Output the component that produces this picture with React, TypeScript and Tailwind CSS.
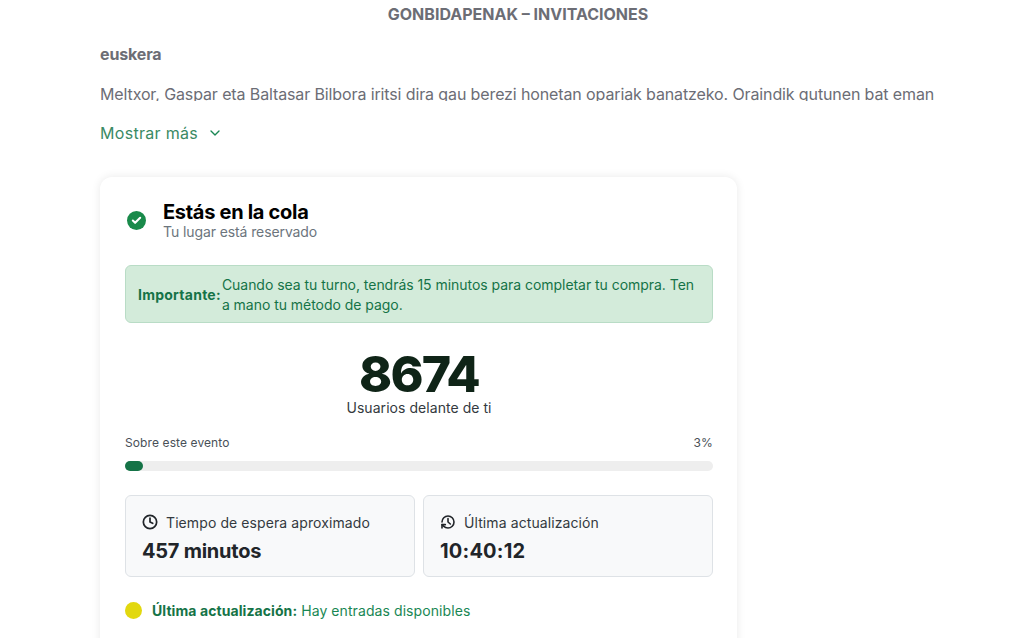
import { Check, ChevronDown, Clock } from 'lucide-react';

function HistoryIcon() {
  return (
    <svg viewBox="0 0 24 24" fill="none" stroke="currentColor" strokeWidth={2.4} strokeLinecap="round" strokeLinejoin="round" className="size-4 text-[#212529]">
      <g transform="translate(0 24) scale(1 -1)">
        <path d="M3 12a9 9 0 1 0 9-9 9.75 9.75 0 0 0-6.74 2.74L3 8" />
        <path d="M3 3v5h5" />
      </g>
      <path d="M12 7v5l3.5 3" />
    </svg>
  );
}

function InfoBox({ icon, label, value, valueClass }: { icon: React.ReactNode; label: string; value: string; valueClass: string }) {
  return (
    <div className="h-[82px] rounded-md border border-[#dee2e6] bg-[#f8f9fa] px-4 pt-[16px]">
      <div className="flex h-5 items-center gap-[8px] text-[14px] tracking-[0.09px] text-[#343a40]">
        {icon}
        <span>{label}</span>
      </div>
      <div className={`mt-[5px] text-[20px] leading-7 font-bold text-[#212529] ${valueClass}`}>{value}</div>
    </div>
  );
}

export default function App() {
  return (
    <div className="h-[638px] overflow-hidden bg-white pl-[100px] font-['Inter',sans-serif]">
      <div className="w-[836px]">
        <h2 className="pt-[5px] text-center text-[16px] leading-[18px] font-bold text-[#6c6d75]">
          GONBIDAPENAK – INVITACIONES
        </h2>
        <p className="mt-[22px] text-[16px] leading-[18px] font-bold tracking-[-0.15px] text-[#6c6d75]">euskera</p>
        <div className="mt-[20px] h-[18px] overflow-hidden">
          <p className="text-[16px] leading-[22px] tracking-[-0.12px] whitespace-nowrap text-[#6c6d75]">
            Meltxor, Gaspar eta Baltasar Bilbora iritsi dira gau berezi honetan opariak banatzeko. Oraindik gutunen bat eman
          </p>
        </div>
        <button className="mt-[21px] flex h-[22px] items-center gap-[9px] text-[16px] tracking-[0.3px] text-[#3a8a64]">
          Mostrar más
          <ChevronDown className="size-[16px] text-[#198754]" strokeWidth={2} />
        </button>
      </div>

      <div className="mt-[33px] h-[600px] w-[637px] rounded-xl bg-white pt-[24px] pr-[24px] pl-[25px] shadow-[0_0_10px_rgba(0,0,0,0.09)]">
        <div className="flex items-center gap-[17px] pl-[2px]">
          <div className="mb-[1px] flex size-[19px] items-center justify-center rounded-full bg-[#198a4a]">
            <Check className="size-[11px] text-white" strokeWidth={4.5} />
          </div>
          <div>
            <div className="text-[20px] leading-[22px] font-bold tracking-[-0.3px] text-black">Estás en la cola</div>
            <div className="-mt-[1px] text-[14px] leading-[19px] tracking-[-0.1px] text-[#6c757d]">Tu lugar está reservado</div>
          </div>
        </div>

        <div className="mt-[24px] flex h-[58px] items-center gap-[1px] rounded-md border border-[#b9dcc6] bg-[#d3ebda] px-3 pt-[2px] text-[14px] leading-5 text-[#157347]">
          <strong className="font-bold tracking-[0.25px] whitespace-nowrap">Importante:</strong>
          <span className="tracking-[-0.04px]">
            Cuando sea tu turno, tendrás 15 minutos para completar tu compra. Ten a mano tu método de pago.
          </span>
        </div>

        <div className="mt-[26px] text-center">
          <div className="text-[50px] leading-[50px] font-extrabold tracking-[-1.8px] text-[#0f2417]">8674</div>
          <div className="text-[14px] leading-[18px] tracking-[0.05px] text-[#343a40]">Usuarios delante de ti</div>
        </div>

        <div className="mt-[18px] flex justify-between text-[12px] leading-4 tracking-[0.1px] text-[#495057]">
          <span>Sobre este evento</span>
          <span>3%</span>
        </div>
        <div className="mt-[10px] h-[10px] rounded-full bg-[#eeeeee]">
          <div className="h-full rounded-full bg-[#157347]" style={{ width: '3%' }} />
        </div>

        <div className="mt-[24px] grid grid-cols-2 gap-2">
          <InfoBox
            icon={<Clock className="size-4 text-[#212529]" strokeWidth={2.6} />}
            label="Tiempo de espera aproximado"
            value="457 minutos"
            valueClass="tracking-[-0.25px]"
          />
          <InfoBox
            icon={<HistoryIcon />}
            label="Última actualización"
            value="10:40:12"
            valueClass="tracking-[0.2px]"
          />
        </div>

        <div className="mt-[24px] flex items-center gap-[10px] text-[14px] leading-5 tracking-[0.08px] text-[#198754]">
          <div className="mb-[2px] size-[17px] rounded-full bg-[#e2d80f]" />
          <span>
            <strong className="font-bold text-[#157347]">Última actualización:</strong> Hay entradas disponibles
          </span>
        </div>
      </div>
    </div>
  );
}
